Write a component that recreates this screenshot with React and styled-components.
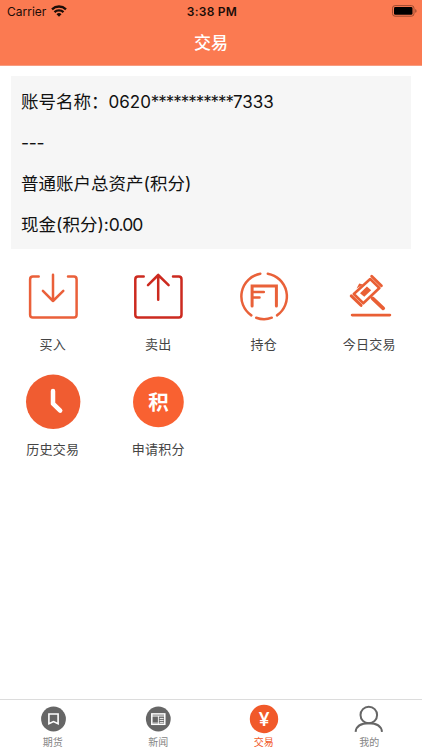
import React from 'react';
import styled, { createGlobalStyle } from 'styled-components';

const ORANGE = '#f1592a';
const GRAY = '#666666';

const App = () => {
  return (
    <>
      <GlobalStyle />
      <Screen>
        <Header>
          <StatusBar>
            <Carrier>
              <span>Carrier</span>
              <WifiIcon />
            </Carrier>
            <Time>3:38 PM</Time>
            <BatteryIcon />
          </StatusBar>
          <Title>交易</Title>
        </Header>
        <AccountCard>
          <AccountLine>账号名称：<AccountNumber>0620<Stars>***********</Stars>7333</AccountNumber></AccountLine>
          <AccountLine><Dashes>---</Dashes></AccountLine>
          <AccountLine>普通账户总资产(积分)</AccountLine>
          <AccountLine>现金(积分):<Amount>0.00</Amount></AccountLine>
        </AccountCard>
        <Menu>
          {menuItems.map(({ label, icon }) => (
            <MenuItem key={label}>
              <MenuIcon viewBox="0 0 60 60">{icon}</MenuIcon>
              <MenuLabel>{label}</MenuLabel>
            </MenuItem>
          ))}
        </Menu>
        <TabBar>
          {tabs.map(({ label, icon, active }) => (
            <Tab key={label}>
              <TabIcon viewBox="0 0 32 32">{icon}</TabIcon>
              <TabLabel $active={active}>{label}</TabLabel>
            </Tab>
          ))}
        </TabBar>
      </Screen>
    </>
  );
}

const WifiIcon = () => (
  <svg width="16" height="12" viewBox="0 0 16 12" fill="none" stroke="#1c0d08" strokeWidth="2.3">
    <path d="M1 4.3 A10.2 10.2 0 0 1 15 4.3" />
    <path d="M3.5 7.2 A6.5 6.5 0 0 1 12.5 7.2" />
    <path d="M8 11.8 L5.5 9.3 A3.5 3.5 0 0 1 10.5 9.3 Z" fill="#1c0d08" stroke="none" />
  </svg>
);

const BatteryIcon = () => (
  <svg width="25" height="12" viewBox="0 0 25 12">
    <rect x="0.5" y="0.6" width="21.5" height="10.6" rx="2.6" fill="none" stroke="#9c4b31" />
    <rect x="2" y="2.1" width="18.5" height="7.6" rx="1.3" fill="#000" />
    <path d="M23.2 4 Q24.6 4.6 24.6 5.9 Q24.6 7.2 23.2 7.8 Z" fill="#9c4b31" />
  </svg>
);

const menuItems = [
  {
    label: '买入',
    icon: (
      <g fill="none" stroke="#ea603a" strokeWidth="2.5" strokeLinecap="round" strokeLinejoin="round">
        <path d="M15.7 9.6 H9.8 Q7.1 9.6 7.1 12.4 V47.8 Q7.1 50.6 9.8 50.6 H51 Q53.6 50.6 53.6 47.8 V12.4 Q53.6 9.6 51 9.6 H45" />
        <path d="M30 7.8 V34 M19.9 23.9 L30 34 L40.3 23.9" />
      </g>
    ),
  },
  {
    label: '卖出',
    icon: (
      <g fill="none" stroke="#cc2a1f" strokeWidth="2.5" strokeLinecap="round" strokeLinejoin="round">
        <path d="M15.7 9.6 H10 Q7.3 9.6 7.3 12.4 V47.8 Q7.3 50.6 10 50.6 H50.9 Q53.5 50.6 53.5 47.8 V12.4 Q53.5 9.6 50.9 9.6 H45" />
        <path d="M30.2 32.7 V8 M20 18.2 L30.2 8 L40.6 18.2" />
      </g>
    ),
  },
  {
    label: '持仓',
    icon: (
      <g fill="none" stroke="#e96139" strokeWidth="2.5" strokeLinecap="round">
        <path d="M26.3 6.7 A23.1 23.1 0 0 0 17.3 48.4" />
        <path d="M33.8 6.7 A23.1 23.1 0 0 1 43 48.4" />
        <path d="M22.2 50.7 Q30.2 53.6 37.8 50.7" />
        <path d="M18.1 39.1 V19 H42.4 V39.1" strokeWidth="3" />
        <path d="M19 24.9 H29.8 M19 30.4 H25.5" />
      </g>
    ),
  },
  {
    label: '今日交易',
    icon: (
      <g fill="none" stroke="#e95f35" strokeLinecap="round">
        <path d="M13.2 48.1 H50.8" strokeWidth="2.9" />
        <path d="M33.6 31.4 L44.2 41.3" strokeWidth="3.8" />
        <path d="M12.2 28.9 L22.1 38.4 M32.7 9.3 L42.4 18.7" strokeWidth="2.9" />
        <path d="M14.8 27 L31.2 12 L40.4 21 L24.3 36.3 Z" strokeWidth="2.6" strokeLinejoin="round" />
        <path d="M17.6 21.6 L20.2 16.6 L24 17.4 Z" fill="#e95f35" stroke="none" />
        <path d="M21 26.2 L27.9 19.4 L32.2 23.3 L25.3 29.8 Z" fill="#e95f35" stroke="none" />
      </g>
    ),
  },
  {
    label: '历史交易',
    icon: (
      <>
        <circle cx="30.2" cy="28.8" r="27.2" fill="#f05c31" />
        <path d="M30 18 V30.7 L37.2 37.7" fill="none" stroke="#fff" strokeWidth="4.5" strokeLinecap="round" strokeLinejoin="round" />
      </>
    ),
  },
  {
    label: '申请积分',
    icon: (
      <>
        <circle cx="30.4" cy="28.9" r="25.4" fill="#f96131" />
        <text x="30.4" y="37" textAnchor="middle" fontSize="20.5" fontWeight="700" fill="#fff">积</text>
      </>
    ),
  },
];

const tabs = [
  {
    label: '期货',
    icon: (
      <>
        <circle cx="16.5" cy="16" r="12.4" fill={GRAY} />
        <path d="M11.9 11 H21.1 V20.8 L16.5 18.6 L11.9 20.8 Z" fill="none" stroke="#fff" strokeWidth="1.6" />
      </>
    ),
  },
  {
    label: '新闻',
    icon: (
      <>
        <circle cx="16.3" cy="16" r="12.4" fill={GRAY} />
        <rect x="9.8" y="10.9" width="13" height="10.4" fill="none" stroke="#fff" strokeWidth="1.5" />
        <path d="M10 13 H23" stroke="#fff" />
        <path d="M16.4 13 V21" stroke="#fff" strokeWidth="0.9" />
        <path d="M10.6 19.9 H16" stroke="#fff" strokeWidth="0.6" />
        <path d="M17.6 15.4 H21.6 M17.6 17.4 H21.6 M17.6 19.4 H21.6" stroke="#fff" strokeWidth="0.9" />
      </>
    ),
  },
  {
    label: '交易',
    active: true,
    icon: (
      <>
        <circle cx="16" cy="16" r="14.2" fill={ORANGE} />
        <text x="16" y="22.5" textAnchor="middle" fontFamily="Lato" fontSize="18.5" fontWeight="700" fill="#fff">¥</text>
      </>
    ),
  },
  {
    label: '我的',
    icon: (
      <g fill="none" stroke={GRAY} strokeWidth="2">
        <circle cx="15.8" cy="12" r="8.3" />
        <path d="M2.6 28.8 C3.2 23.5 8 20.3 15.8 20.3 C23.6 20.3 28.4 23.5 29 28.8" />
      </g>
    ),
  },
];

const GlobalStyle = createGlobalStyle`
  * {
    box-sizing: border-box;
  }

  body {
    margin: 0;
    background-color: #fff;
    font-family: Inter, 'Noto Sans CJK SC', sans-serif;
  }
`;

const Screen = styled.div`
  height: 100vh;
  display: flex;
  flex-direction: column;
  overflow: hidden;
`;

const Header = styled.header`
  flex: none;
  height: 66px;
  background-color: #fb7a51;
  border-bottom: 1px solid #f79c80;
`;

const StatusBar = styled.div`
  height: 22px;
  padding: 0 5px 0 7px;
  display: grid;
  grid-template-columns: 1fr auto 1fr;
  align-items: center;
  color: #1c0d08;

  > :last-child {
    justify-self: end;
  }
`;

const Carrier = styled.div`
  display: flex;
  align-items: center;
  gap: 5px;
  font-size: 12px;
`;

const Time = styled.div`
  font-size: 12px;
  font-weight: 600;
  letter-spacing: 0.25px;
`;

const Title = styled.h1`
  margin: 0;
  height: 43px;
  line-height: 43px;
  text-align: center;
  font-size: 17px;
  font-weight: 500;
  color: #fff;
`;

const AccountCard = styled.section`
  flex: none;
  margin: 10px 11px 0;
  padding: 5px 10px 4px;
  height: 173px;
  background-color: #f6f6f6;
`;

const AccountLine = styled.div`
  height: 41px;
  line-height: 41px;
  font-size: 17.5px;
  white-space: nowrap;
  color: #111;
`;

const AccountNumber = styled.span`
  font-size: 17px;
`;

const Stars = styled.span`
  letter-spacing: -1.05px;
`;

const Dashes = styled.span`
  letter-spacing: -0.3px;
`;

const Amount = styled.span`
  letter-spacing: -0.9px;
`;

const Menu = styled.nav`
  flex: 1;
  padding-top: 18px;
  display: grid;
  grid-template-columns: repeat(4, 1fr);
  grid-auto-rows: 105.5px;
`;

const MenuItem = styled.div`
  display: flex;
  flex-direction: column;
  align-items: center;
`;

const MenuIcon = styled.svg`
  width: 60px;
  height: 60px;
`;

const MenuLabel = styled.span`
  margin-top: 6.5px;
  line-height: 21px;
  font-size: 13px;
  letter-spacing: 0.3px;
  color: #444;
`;

const TabBar = styled.footer`
  flex: none;
  height: 51px;
  display: grid;
  grid-template-columns: repeat(4, 1fr);
  border-top: 1px solid #dcdcdc;
`;

const Tab = styled.div`
  display: flex;
  flex-direction: column;
  align-items: center;
  padding-top: 3px;
`;

const TabIcon = styled.svg`
  width: 32px;
  height: 32px;
`;

const TabLabel = styled.span`
  line-height: 14px;
  font-size: 10px;
  color: ${({ $active }) => ($active ? ORANGE : '#858585')};
`;

export default App;
